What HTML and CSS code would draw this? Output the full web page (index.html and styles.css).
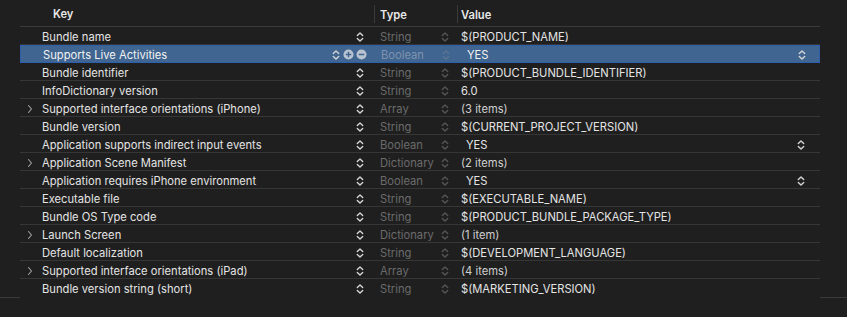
FILE: index.html
```html
<!DOCTYPE html>
<html lang="en">
<head>
    <meta charset="UTF-8">
    <title>Info</title>
    <link rel="stylesheet" href="styles.css">
</head>
<body>
    <svg width="0" height="0" class="defs">
        <symbol id="stepper" viewBox="0 0 8 12">
            <path d="M1.3 4.6 L4 1.9 L6.7 4.6 M1.3 7.4 L4 10.1 L6.7 7.4" fill="none" stroke="currentColor" stroke-width="1.4" stroke-linecap="round" stroke-linejoin="round"/>
        </symbol>
        <symbol id="disclosure" viewBox="0 0 6 10">
            <path d="M1.5 1.5 L4.5 5 L1.5 8.5" fill="none" stroke="currentColor" stroke-width="1.1" stroke-linecap="round" stroke-linejoin="round"/>
        </symbol>
    </svg>

    <div class="plist">
        <div class="header">
            <div class="col-key">Key</div>
            <div class="col-type">Type</div>
            <div class="col-value">Value</div>
        </div>

        <div class="row">
            <div class="toggle"></div>
            <div class="key"><span class="name">Bundle name</span><svg class="step"><use href="#stepper"/></svg></div>
            <div class="type"><span>String</span><svg class="step dim"><use href="#stepper"/></svg></div>
            <div class="value">$(PRODUCT_NAME)</div>
        </div>

        <div class="row selected">
            <div class="toggle"></div>
            <div class="key">
                <span class="name">Supports Live Activities</span>
                <svg class="step"><use href="#stepper"/></svg>
                <svg class="circle" viewBox="0 0 12 12"><circle cx="6" cy="6" r="5.5" fill="#b9c3d0"/><path d="M3 6 H9 M6 3 V9" stroke="#3f6590" stroke-width="1.6"/></svg>
                <svg class="circle" viewBox="0 0 12 12"><circle cx="6" cy="6" r="5.5" fill="#b9c3d0"/><path d="M3 6 H9" stroke="#3f6590" stroke-width="1.6"/></svg>
            </div>
            <div class="type"><span>Boolean</span><svg class="step dim"><use href="#stepper"/></svg></div>
            <div class="value bool"><span>YES</span><svg class="step"><use href="#stepper"/></svg></div>
        </div>

        <div class="row">
            <div class="toggle"></div>
            <div class="key"><span class="name">Bundle identifier</span><svg class="step"><use href="#stepper"/></svg></div>
            <div class="type"><span>String</span><svg class="step dim"><use href="#stepper"/></svg></div>
            <div class="value">$(PRODUCT_BUNDLE_IDENTIFIER)</div>
        </div>

        <div class="row">
            <div class="toggle"></div>
            <div class="key"><span class="name">InfoDictionary version</span><svg class="step"><use href="#stepper"/></svg></div>
            <div class="type"><span>String</span><svg class="step dim"><use href="#stepper"/></svg></div>
            <div class="value">6.0</div>
        </div>

        <div class="row">
            <div class="toggle"><svg class="chev"><use href="#disclosure"/></svg></div>
            <div class="key"><span class="name">Supported interface orientations (iPhone)</span><svg class="step"><use href="#stepper"/></svg></div>
            <div class="type"><span>Array</span><svg class="step dim"><use href="#stepper"/></svg></div>
            <div class="value count">(3 items)</div>
        </div>

        <div class="row">
            <div class="toggle"></div>
            <div class="key"><span class="name">Bundle version</span><svg class="step"><use href="#stepper"/></svg></div>
            <div class="type"><span>String</span><svg class="step dim"><use href="#stepper"/></svg></div>
            <div class="value">$(CURRENT_PROJECT_VERSION)</div>
        </div>

        <div class="row">
            <div class="toggle"></div>
            <div class="key"><span class="name">Application supports indirect input events</span><svg class="step"><use href="#stepper"/></svg></div>
            <div class="type"><span>Boolean</span><svg class="step dim"><use href="#stepper"/></svg></div>
            <div class="value bool"><span>YES</span><svg class="step"><use href="#stepper"/></svg></div>
        </div>

        <div class="row">
            <div class="toggle"><svg class="chev"><use href="#disclosure"/></svg></div>
            <div class="key"><span class="name">Application Scene Manifest</span><svg class="step"><use href="#stepper"/></svg></div>
            <div class="type"><span>Dictionary</span><svg class="step dim"><use href="#stepper"/></svg></div>
            <div class="value count">(2 items)</div>
        </div>

        <div class="row">
            <div class="toggle"></div>
            <div class="key"><span class="name">Application requires iPhone environment</span><svg class="step"><use href="#stepper"/></svg></div>
            <div class="type"><span>Boolean</span><svg class="step dim"><use href="#stepper"/></svg></div>
            <div class="value bool"><span>YES</span><svg class="step"><use href="#stepper"/></svg></div>
        </div>

        <div class="row">
            <div class="toggle"></div>
            <div class="key"><span class="name">Executable file</span><svg class="step"><use href="#stepper"/></svg></div>
            <div class="type"><span>String</span><svg class="step dim"><use href="#stepper"/></svg></div>
            <div class="value">$(EXECUTABLE_NAME)</div>
        </div>

        <div class="row">
            <div class="toggle"></div>
            <div class="key"><span class="name">Bundle OS Type code</span><svg class="step"><use href="#stepper"/></svg></div>
            <div class="type"><span>String</span><svg class="step dim"><use href="#stepper"/></svg></div>
            <div class="value">$(PRODUCT_BUNDLE_PACKAGE_TYPE)</div>
        </div>

        <div class="row">
            <div class="toggle"><svg class="chev"><use href="#disclosure"/></svg></div>
            <div class="key"><span class="name">Launch Screen</span><svg class="step"><use href="#stepper"/></svg></div>
            <div class="type"><span>Dictionary</span><svg class="step dim"><use href="#stepper"/></svg></div>
            <div class="value count">(1 item)</div>
        </div>

        <div class="row">
            <div class="toggle"></div>
            <div class="key"><span class="name">Default localization</span><svg class="step"><use href="#stepper"/></svg></div>
            <div class="type"><span>String</span><svg class="step dim"><use href="#stepper"/></svg></div>
            <div class="value">$(DEVELOPMENT_LANGUAGE)</div>
        </div>

        <div class="row">
            <div class="toggle"><svg class="chev"><use href="#disclosure"/></svg></div>
            <div class="key"><span class="name">Supported interface orientations (iPad)</span><svg class="step"><use href="#stepper"/></svg></div>
            <div class="type"><span>Array</span><svg class="step dim"><use href="#stepper"/></svg></div>
            <div class="value count">(4 items)</div>
        </div>

        <div class="row last">
            <div class="toggle"></div>
            <div class="key"><span class="name">Bundle version string (short)</span><svg class="step"><use href="#stepper"/></svg></div>
            <div class="type"><span>String</span><svg class="step dim"><use href="#stepper"/></svg></div>
            <div class="value">$(MARKETING_VERSION)</div>
        </div>
    </div>

    <div class="footer">
        <div class="edge left"></div>
        <div class="gap"></div>
        <div class="edge right"></div>
    </div>
</body>
</html>
```

FILE: styles.css
```css
body {
    margin: 0;
    background: #1f1f1f;
    font-family: Inter, "Noto Sans", sans-serif;
    font-size: 11.2px;
    color: #e4e4e4;
    width: 847px;
    height: 317px;
    overflow: hidden;
}

.defs {
    position: absolute;
}

.plist {
    margin-left: 20px;
    width: 800px;
}

.header {
    display: grid;
    grid-template-columns: 354px 83px 363px;
    height: 27px;
    box-sizing: border-box;
    border-bottom: 1px solid #3a3a3a;
    font-weight: 600;
    color: #e8e8e8;
}

.header > div {
    display: flex;
    align-items: center;
    height: 26px;
    box-sizing: border-box;
    padding-top: 2px;
}

.col-key {
    padding-left: 33px;
}

.col-type,
.col-value {
    border-left: 1px solid #3a3a3a;
    padding-left: 5px;
    height: 18px !important;
    margin-top: 5px;
}

.col-value {
    padding-left: 3px;
}

.row {
    display: grid;
    grid-template-columns: 22px 332px 83px 363px;
    height: 18px;
    box-sizing: border-box;
    border-bottom: 1px solid #363636;
    align-items: center;
}

.row.last {
    border-bottom: none;
}

.row > div {
    display: flex;
    align-items: center;
    height: 17px;
    box-sizing: border-box;
    padding-top: 2px;
}

.toggle {
    color: #a3a3a3;
    padding-left: 7px;
}

.chev {
    width: 6px;
    height: 10px;
}

.key .name {
    flex: 1;
}

.step {
    width: 8px;
    height: 12px;
    color: #d4d4d4;
    flex: none;
}

.key .step {
    margin-right: 10px;
}

.type {
    color: #6b6b6b;
    padding-left: 6px;
}

.type span {
    flex: 1;
}

.type .step {
    margin-right: 8px;
}

.step.dim {
    color: #555555;
}

.value {
    padding-left: 4px;
}

.value.bool span {
    flex: 1;
    padding-left: 5px;
}

.value.bool .step {
    margin-right: 15px;
}

.value.count {
    color: #cfcfcf;
}

.row.selected {
    background: #3f6590;
    border: 1px solid #2c5fae;
    height: 18px;
}

.row.selected > div {
    height: 16px;
    padding-top: 1px;
}

.row.selected .key .step {
    margin-right: 3px;
}

.row.selected .circle {
    width: 11px;
    height: 11px;
    margin-right: 2px;
}

.row.selected .circle:last-child {
    margin-right: 8px;
}

.row.selected .type {
    color: #7f93ae;
}

.row.selected .step.dim {
    color: #5d7592;
}

.row.selected .key .name,
.row.selected .value span {
    color: #f2f2f2;
}

.footer {
    display: flex;
    height: 1px;
}

.edge {
    background: #3a3a3a;
}

.edge.left {
    width: 20px;
}

.gap {
    width: 800px;
}

.edge.right {
    flex: 1;
}
```
